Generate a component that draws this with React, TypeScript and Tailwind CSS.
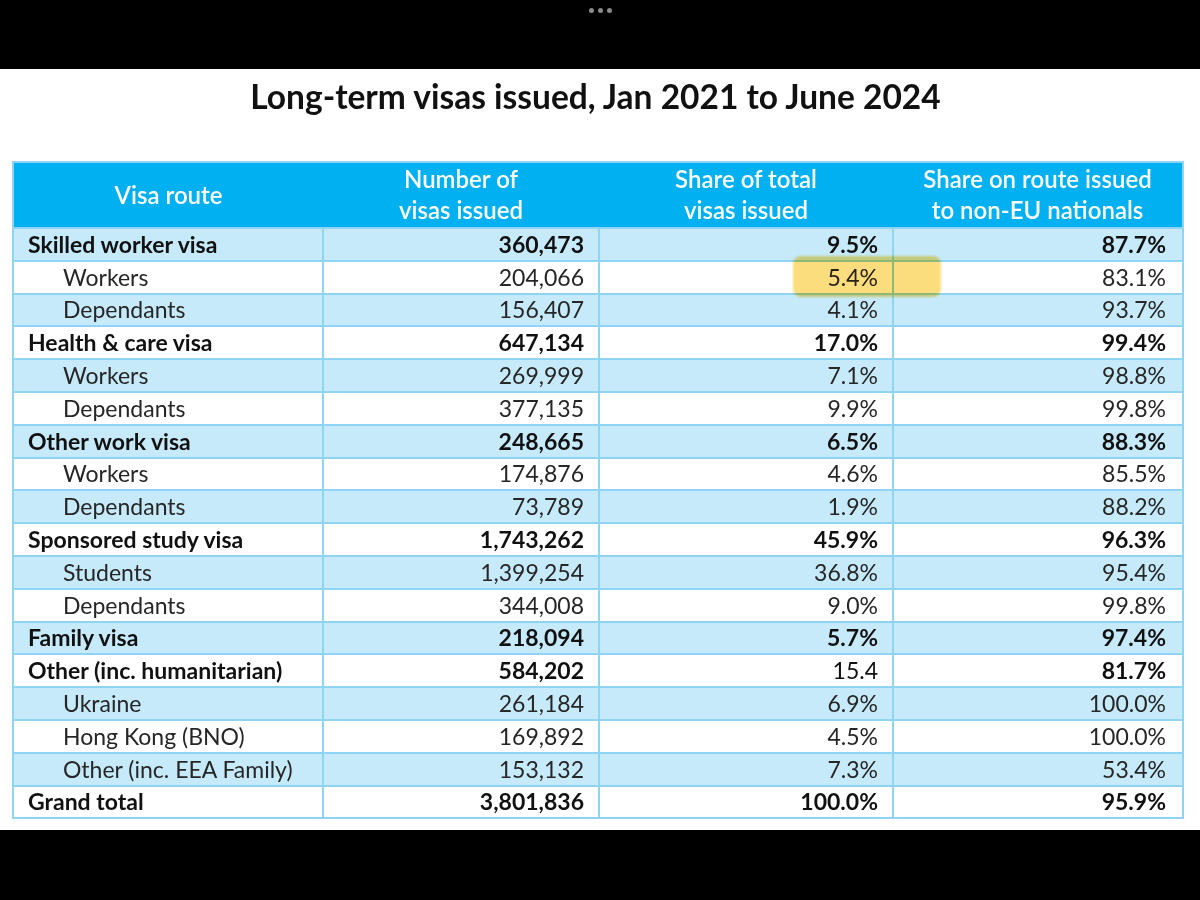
import React from "react";

type Row = {
  route: string;
  count: string;
  share: string;
  nonEu: string;
  sub?: boolean;
  plainShare?: boolean;
};

const rows: Row[] = [
  { route: "Skilled worker visa", count: "360,473", share: "9.5%", nonEu: "87.7%" },
  { route: "Workers", count: "204,066", share: "5.4%", nonEu: "83.1%", sub: true },
  { route: "Dependants", count: "156,407", share: "4.1%", nonEu: "93.7%", sub: true },
  { route: "Health & care visa", count: "647,134", share: "17.0%", nonEu: "99.4%" },
  { route: "Workers", count: "269,999", share: "7.1%", nonEu: "98.8%", sub: true },
  { route: "Dependants", count: "377,135", share: "9.9%", nonEu: "99.8%", sub: true },
  { route: "Other work visa", count: "248,665", share: "6.5%", nonEu: "88.3%" },
  { route: "Workers", count: "174,876", share: "4.6%", nonEu: "85.5%", sub: true },
  { route: "Dependants", count: "73,789", share: "1.9%", nonEu: "88.2%", sub: true },
  { route: "Sponsored study visa", count: "1,743,262", share: "45.9%", nonEu: "96.3%" },
  { route: "Students", count: "1,399,254", share: "36.8%", nonEu: "95.4%", sub: true },
  { route: "Dependants", count: "344,008", share: "9.0%", nonEu: "99.8%", sub: true },
  { route: "Family visa", count: "218,094", share: "5.7%", nonEu: "97.4%" },
  { route: "Other (inc. humanitarian)", count: "584,202", share: "15.4", nonEu: "81.7%", plainShare: true },
  { route: "Ukraine", count: "261,184", share: "6.9%", nonEu: "100.0%", sub: true },
  { route: "Hong Kong (BNO)", count: "169,892", share: "4.5%", nonEu: "100.0%", sub: true },
  { route: "Other (inc. EEA Family)", count: "153,132", share: "7.3%", nonEu: "53.4%", sub: true },
  { route: "Grand total", count: "3,801,836", share: "100.0%", nonEu: "95.9%" },
];

export default function App() {
  return (
    <div className="w-[1200px] h-[900px] bg-black flex flex-col font-['Lato','Liberation_Sans',sans-serif]">
      <div className="h-[69px] flex justify-center pt-[8px] gap-[4px]">
        <span className="w-[5px] h-[5px] rounded-full bg-[#8a8a8a]" />
        <span className="w-[5px] h-[5px] rounded-full bg-[#8a8a8a]" />
        <span className="w-[5px] h-[5px] rounded-full bg-[#8a8a8a]" />
      </div>

      <div className="h-[761px] bg-white px-[12px]">
        <h1 className="text-center font-bold text-[33.5px] leading-[40px] text-[#111] pt-[7px] h-[92px] pr-[9px]">
          Long-term visas issued, Jan 2021 to June 2024
        </h1>

        <div className="relative w-[1170px]">
          <table className="table-fixed w-full border-collapse border-2 border-[#8fd5f3] text-[23px] text-[#1c1c1c]">
            <colgroup>
              <col className="w-[310px]" />
              <col className="w-[276px]" />
              <col className="w-[294px]" />
              <col className="w-[290px]" />
            </colgroup>
            <thead>
              <tr className="h-[66px] bg-[#00b0f0] text-white text-[24px] leading-[31px]">
                <th className="font-semibold pb-[2px]">Visa route</th>
                <th className="font-semibold pb-[2px]">
                  Number of
                  <br />
                  visas issued
                </th>
                <th className="font-semibold pb-[2px]">
                  Share of total
                  <br />
                  visas issued
                </th>
                <th className="font-semibold pb-[2px]">
                  Share on route issued
                  <br />
                  to non-EU nationals
                </th>
              </tr>
            </thead>
            <tbody>
              {rows.map((r, i) => (
                <tr
                  key={i}
                  className={`h-[32.8px] leading-none ${i % 2 === 0 ? "bg-[#c7eafa]" : "bg-white"} ${r.sub ? "text-[#262626]" : "font-bold text-[#111]"}`}
                >
                  <td className={`border-2 border-[#8fd5f3] ${r.sub ? "pl-[49px]" : "pl-[14px]"}`}>{r.route}</td>
                  <td className="border-2 border-[#8fd5f3] text-right pr-[14px]">{r.count}</td>
                  <td className={`border-2 border-[#8fd5f3] text-right pr-[14px] ${r.plainShare ? "font-normal" : ""}`}>{r.share}</td>
                  <td className="border-2 border-[#8fd5f3] text-right pr-[16px]">{r.nonEu}</td>
                </tr>
              ))}
            </tbody>
          </table>

          {/* highlighter mark over 5.4% */}
          <div className="absolute left-[781px] top-[95px] w-[148px] h-[41px] rounded-[8px] bg-[#fbd251] opacity-75 mix-blend-multiply blur-[1px]" />
        </div>
      </div>

      <div className="flex-1 bg-black" />
    </div>
  );
}
